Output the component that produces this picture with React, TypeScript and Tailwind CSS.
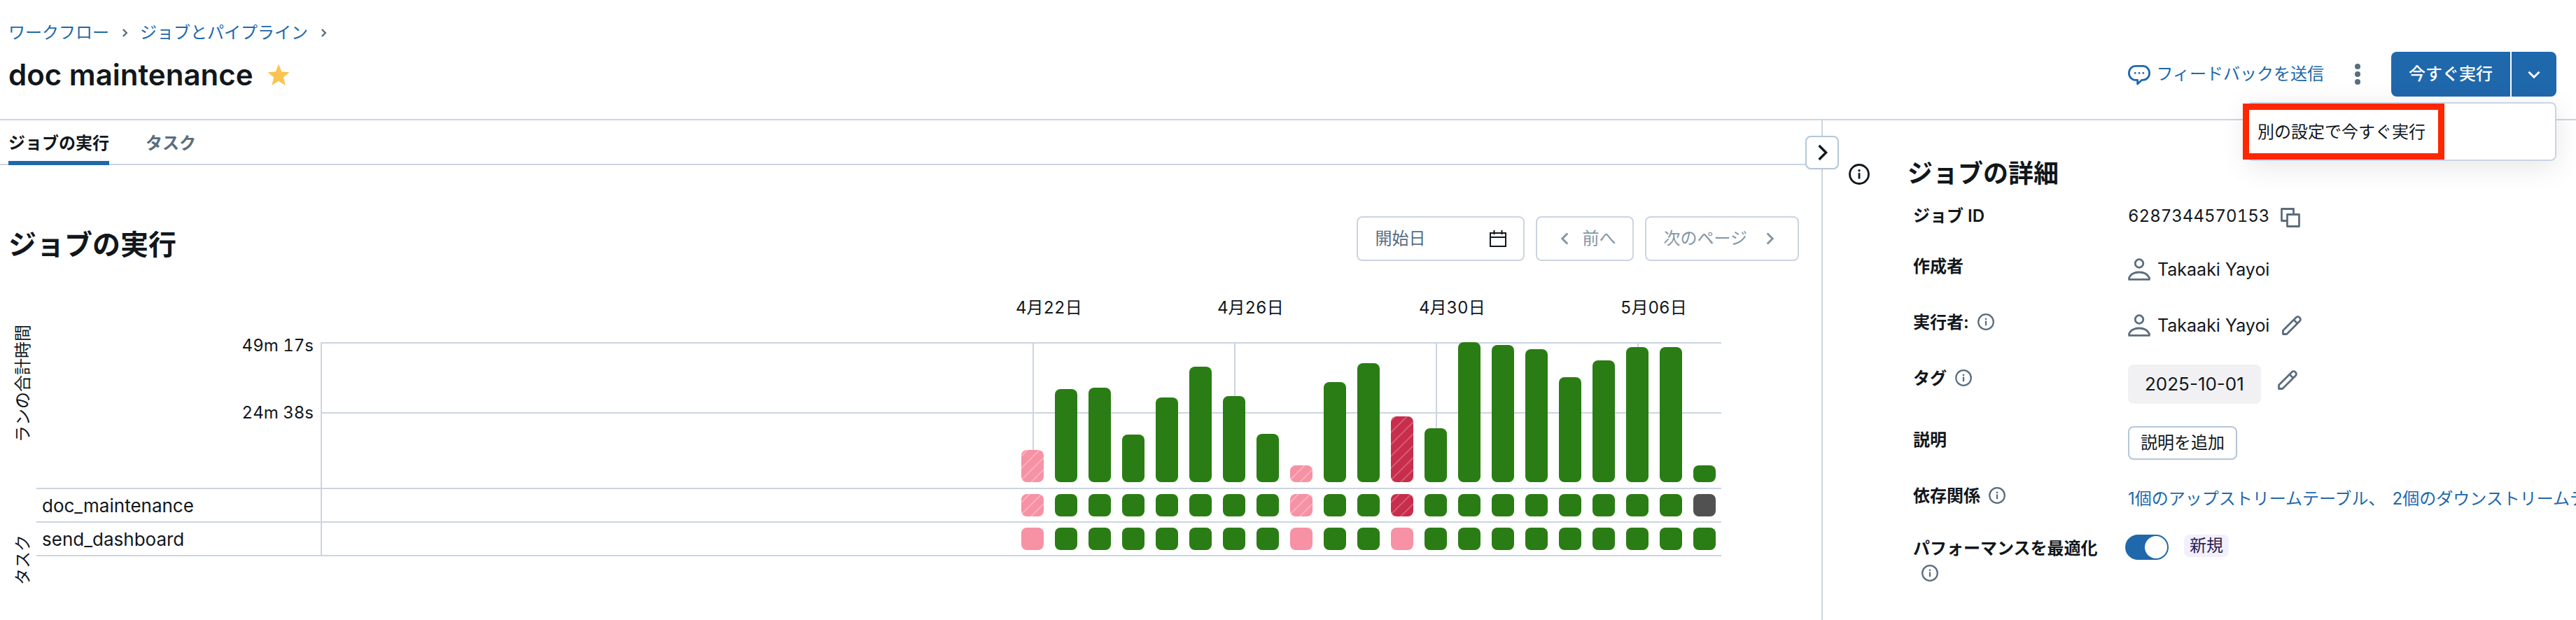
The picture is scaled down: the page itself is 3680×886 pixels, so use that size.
import type { ReactNode, SVGProps } from "react";

type Status = "success" | "skipped" | "failed" | "upstream" | "canceled";

interface Run {
  height: number;
  date?: string;
  run: Status;
  tasks: [Status, Status];
}

const ok = (height: number, date?: string): Run => ({
  height,
  date,
  run: "success",
  tasks: ["success", "success"],
});

const runs: Run[] = [
  { height: 46, date: "4月22日", run: "skipped", tasks: ["skipped", "upstream"] },
  ok(133),
  ok(135),
  ok(68),
  ok(121),
  ok(165),
  ok(123, "4月26日"),
  ok(69),
  { height: 24, run: "skipped", tasks: ["skipped", "upstream"] },
  ok(143),
  ok(170),
  { height: 94, run: "failed", tasks: ["failed", "upstream"] },
  ok(77, "4月30日"),
  ok(200),
  ok(196),
  ok(190),
  ok(150),
  ok(174),
  ok(193, "5月06日"),
  ok(193),
  { height: 24, run: "success", tasks: ["canceled", "success"] },
];

const statusClass: Record<Status, string> = {
  success: "bg-[#2a7d15]",
  upstream: "bg-[#f791a4]",
  canceled: "bg-[#515151]",
  skipped:
    "bg-[#f791a4] bg-[repeating-linear-gradient(-45deg,#faaebc_0px,#faaebc_2px,transparent_2px,transparent_12px)]",
  failed:
    "bg-[#c82d4c] bg-[repeating-linear-gradient(-45deg,#d45870_0px,#d45870_2px,transparent_2px,transparent_12px)]",
};

const taskNames = ["doc_maintenance", "send_dashboard"];

/* Icons */

const InfoIcon = (props: SVGProps<SVGSVGElement>) => (
  <svg viewBox="0 0 16 16" fill="currentColor" aria-hidden="true" {...props}>
    <path d="M7.25 7h1.5v4.5h-1.5z" />
    <circle cx="8" cy="5.2" r="0.9" />
    <circle cx="8" cy="8" r="7.2" fill="none" stroke="currentColor" strokeWidth="1.5" />
  </svg>
);

const Chevron = (props: SVGProps<SVGSVGElement>) => (
  <svg viewBox="0 0 16 16" fill="none" stroke="currentColor" strokeWidth="1.7" aria-hidden="true" {...props}>
    <path d="M5.8 3l5 5-5 5" />
  </svg>
);

const UserIcon = () => (
  <svg viewBox="0 0 32 32" className="size-8 text-[#5a6d7e]" fill="none" stroke="currentColor" strokeWidth="2.8" aria-hidden="true">
    <circle cx="16" cy="7.5" r="5.8" />
    <path d="M1.6 30.4v-2.6C4 23 9.6 20 16 20s12 3 14.4 7.8v2.6z" strokeLinejoin="round" />
  </svg>
);

const PencilIcon = () => (
  <svg viewBox="0 0 28 28" className="size-7" fill="none" stroke="currentColor" strokeWidth="2.8" strokeLinejoin="round" aria-hidden="true">
    <path d="M1.5 26.5v-5.2L20.3 2.5a3.2 3.2 0 014.5 0l.7.7a3.2 3.2 0 010 4.5L6.7 26.5zM16.8 6l5.200 5.200" />
  </svg>
);

const CopyIcon = () => (
  <svg viewBox="0 0 28 28" className="size-7" fill="none" stroke="currentColor" strokeWidth="2.8" strokeLinejoin="round" aria-hidden="true">
    <path d="M9.5 18.5h-8v-17h17v8" />
    <path d="M9.5 9.5h17v17h-17z" />
  </svg>
);

const CalendarIcon = () => (
  <svg viewBox="0 0 24 24" className="size-6 text-[#11171c]" fill="none" stroke="currentColor" strokeWidth="2" aria-hidden="true">
    <path d="M1 4h22v19H1zM1 10h22M6.5 0v6M17.5 0v6" />
  </svg>
);

const SpeechIcon = () => (
  <svg viewBox="0 0 32 32" className="size-8" fill="none" stroke="currentColor" strokeWidth="2.8" strokeLinejoin="round" aria-hidden="true">
    <path d="M11 4.400h10c5.400 0 9.600 4.400 9.600 10s-4.200 10-9.600 10h-1.500L13.600 30v-5.600H11c-5.400 0-9.600-4.400-9.600-10s4.200-10 9.600-10z" />
    <g fill="currentColor" stroke="none">
      <circle cx="10.2" cy="14.4" r="1.4" />
      <circle cx="16" cy="14.4" r="1.4" />
      <circle cx="21.8" cy="14.4" r="1.4" />
    </g>
  </svg>
);

const StarIcon = () => (
  <svg viewBox="0 0 32 32" className="size-8" fill="#fbc34f" aria-hidden="true">
    <path d="M16 .5l4.300 11 11.200.8-8.600 7.300 2.800 11.400L16 24.800 6.300 31l2.800-11.400L.5 12.300l11.200-.8z" />
  </svg>
);

/* Left side */

const RunChart = () => (
  <div className="mt-11 mr-[143px] flex flex-col tabular-nums">
    <div className="flex">
      <div className="flex w-[52px] shrink-0 justify-center pt-[46px] pl-[14px]">
        <span className="h-[168px] rotate-180 whitespace-nowrap [text-orientation:sideways] [writing-mode:vertical-rl]">
          ランの合計時間
        </span>
      </div>
      <div className="flex w-[406px] shrink-0 flex-col gap-16 pt-[60px] pr-[10px] text-right">
        <span>49m 17s</span>
        <span>24m 38s</span>
      </div>
      <div className="min-w-0 flex-1 pt-[71px]">
        <div className="relative h-[208px] border-t-2 border-l-2 border-[#cbd5e1]">
          <div className="absolute inset-x-0 top-[98px] border-t-2 border-[#cbd5e1]" />
          <div className="absolute -top-0.5 right-2 flex h-[200px] items-end gap-4">
            {runs.map((r, i) => (
              <div key={i} className="relative flex h-full w-8 items-end">
                {r.date && (
                  <>
                    <span className="absolute -top-[65px] -left-2 whitespace-nowrap">{r.date}</span>
                    <div className="absolute inset-y-0 left-4 w-0.5 bg-[#cbd5e1]" />
                  </>
                )}
                <div className={`relative w-full rounded-lg ${statusClass[r.run]}`} style={{ height: r.height }} />
              </div>
            ))}
          </div>
        </div>
      </div>
    </div>

    <div className="flex">
      <div className="flex w-[52px] shrink-0 justify-center pt-[67px] pl-[14px]">
        <span className="h-[72px] rotate-180 whitespace-nowrap [text-orientation:sideways] [writing-mode:vertical-rl]">
          タスク
        </span>
      </div>
      <div className="flex-1">
        {taskNames.map((name, t) => (
          <div key={name} className="flex h-12 border-t-2 border-[#cbd5e1] last:h-[50px] last:border-b-2">
            <span className="w-[408px] shrink-0 border-r-2 border-[#cbd5e1] pt-2 pl-2 text-[26px]">{name}</span>
            <div className="flex flex-1 items-center justify-end gap-4 pr-2">
              {runs.map((r, i) => (
                <div key={i} className={`size-8 rounded-lg ${statusClass[r.tasks[t]]}`} />
              ))}
            </div>
          </div>
        ))}
      </div>
    </div>
  </div>
);

/* Right side */

interface DetailRowProps {
  label: string;
  info?: boolean;
  className?: string;
  valueClassName?: string;
  children: ReactNode;
}

const DetailRow = ({ label, info, className = "", valueClassName = "", children }: DetailRowProps) => (
  <div className={`flex items-start ${className}`}>
    <dt className="mr-3 w-[295px] shrink-0 pt-0.5 leading-9 font-semibold">
      {label}
      {info && <InfoIcon className="ml-3 inline size-6 align-[-3px] text-[#5a6d7e]" />}
    </dt>
    <dd className={`flex items-center whitespace-nowrap ${valueClassName}`}>{children}</dd>
  </div>
);

const JobDetails = () => (
  <aside className="flex min-w-0 flex-1 overflow-hidden pt-[52px] pl-[37px]">
    <InfoIcon className="mt-[10px] size-[30px] shrink-0" />
    <div className="ml-[54px]">
      <h2 className="h-[65px] text-4xl leading-[48px] font-semibold">ジョブの詳細</h2>
      <dl className="pl-2">
        <DetailRow label="ジョブ ID" className="h-[72px]" valueClassName="pt-1 gap-4 tabular-nums">
          6287344570153
          <button type="button" aria-label="コピー" className="mt-1 text-[#5a6d7e]">
            <CopyIcon />
          </button>
        </DetailRow>
        <DetailRow label="作成者" className="h-20" valueClassName="pt-2 gap-2.5 text-[25px]">
          <UserIcon />
          Takaaki Yayoi
        </DetailRow>
        <DetailRow label="実行者:" info className="h-20" valueClassName="pt-2 gap-2.5 text-[25px]">
          <UserIcon />
          Takaaki Yayoi
          <button type="button" aria-label="実行者を編集" className="ml-2 text-[#5a6d7e]">
            <PencilIcon />
          </button>
        </DetailRow>
        <DetailRow label="タグ" info className="h-[88px]">
          <span className="rounded-lg bg-[#f1f1f4] px-6 py-3 text-[26px]">2025-10-01</span>
          <button type="button" aria-label="タグを編集" className="mt-2 ml-6 self-start text-[#5a6d7e]">
            <PencilIcon />
          </button>
        </DetailRow>
        <DetailRow label="説明" className="h-20">
          <button type="button" className="h-12 rounded-lg border-2 border-[#b5c7d8] px-4 shadow-xs">
            説明を追加
          </button>
        </DetailRow>
        <DetailRow label="依存関係" info className="h-[75px]" valueClassName="pt-2 gap-2.5">
          <a href="#upstream" className="text-[#2068ac]">1個のアップストリームテーブル、</a>
          <a href="#downstream" className="text-[#2068ac]">2個のダウンストリームテーブル</a>
        </DetailRow>
        <DetailRow label="パフォーマンスを最適化" info>
          <input
            type="checkbox"
            role="switch"
            defaultChecked
            aria-label="パフォーマンスを最適化"
            className="-ml-1 h-9 w-[62px] appearance-none rounded-full border-2 border-[#2068ac] bg-[#2068ac] before:ml-auto before:block before:size-8 before:rounded-full before:bg-white"
          />
          <span className="ml-[22px] self-start rounded-lg bg-[#f2f0fc] px-2 text-[#2c1f55]">新規</span>
        </DetailRow>
      </dl>
    </div>
  </aside>
);

const App = () => {
  return (
    <div className="flex min-h-screen flex-col overflow-hidden bg-white font-['Inter','Noto_Sans_CJK_JP',sans-serif] text-2xl leading-8 text-[#11171c]">
      <header className="flex h-[172px] items-start justify-between border-b-2 border-[#cbd5e1] pr-7 pl-3">
        <div>
          <nav className="flex items-center gap-[14px] pt-[31px] text-[#2068ac]">
            <a href="#workflows">ワークフロー</a>
            <Chevron className="size-4 text-[#5a6d7e]" strokeWidth="2.4" />
            <a href="#jobs">ジョブとパイプライン</a>
            <Chevron className="size-4 text-[#5a6d7e]" strokeWidth="2.4" />
          </nav>
          <div className="mt-4 flex items-center gap-5">
            <h1 className="text-[42px] leading-[56px] font-semibold">doc maintenance</h1>
            <button type="button" aria-label="お気に入り">
              <StarIcon />
            </button>
          </div>
        </div>

        <div className="flex items-center pt-[74px]">
          <a href="#feedback" className="flex items-center gap-2 text-[#2068ac]">
            <SpeechIcon />
            フィードバックを送信
          </a>
          <button type="button" aria-label="その他" className="mx-11 flex flex-col gap-[3px] text-[#5a6d7e]">
            <i className="size-2 rounded-full bg-current" />
            <i className="size-2 rounded-full bg-current" />
            <i className="size-2 rounded-full bg-current" />
          </button>
          <div className="relative flex h-16 text-white">
            <button type="button" className="rounded-l-lg bg-[#2068ac] px-[25px] font-medium">
              今すぐ実行
            </button>
            <button type="button" aria-label="実行オプション" className="ml-0.5 flex w-16 items-center justify-center rounded-r-lg bg-[#2068ac]">
              <Chevron className="size-6 rotate-90" strokeWidth="2" />
            </button>
            <div className="absolute top-[72px] right-0 z-10 flex h-[84px] w-[442px] items-center rounded-lg border-2 border-[#cbd5e1] bg-white text-[#11171c] shadow-[0_8px_40px_rgba(0,0,0,0.10)]">
              <button type="button" className="-ml-2 h-20 w-72 shrink-0 border-[9px] border-[#ff2600] pt-0.5 pl-3 text-left">
                別の設定で今すぐ実行
              </button>
            </div>
          </div>
        </div>
      </header>

      <div className="flex flex-1">
        <main className="relative w-[2604px] shrink-0 border-r-2 border-[#cbd5e1]">
          <div className="flex h-16 items-end gap-[52px] border-b-2 border-[#cbd5e1] pl-3" role="tablist">
            <button type="button" role="tab" aria-selected="true" className="-mb-0.5 h-14 border-b-[6px] border-[#2068ac] font-semibold">
              ジョブの実行
            </button>
            <button type="button" role="tab" aria-selected="false" className="-mb-0.5 h-14 border-b-[6px] border-transparent font-semibold text-[#5a6d7e]">
              タスク
            </button>
          </div>
          <button
            type="button"
            aria-label="詳細を閉じる"
            className="absolute top-[22px] -right-[25px] z-10 flex size-12 items-center justify-center rounded-lg border-2 border-[#b5c7d8] bg-white shadow-xs"
          >
            <Chevron className="size-8" />
          </button>

          <div className="mt-[73px] flex items-start pr-8 pl-3">
            <h2 className="mt-[17px] text-[40px] leading-[48px] font-semibold">ジョブの実行</h2>
            <div className="ml-auto flex h-16 gap-4 text-[#8396a5]">
              <button type="button" className="flex w-60 items-center justify-between rounded-lg border-2 border-[#cbd5e1] px-6 text-[#5a6d7e]">
                開始日
                <CalendarIcon />
              </button>
              <button type="button" disabled className="flex items-center gap-3 rounded-lg border-2 border-[#cbd5e1] px-6">
                <Chevron className="ml-1 size-6 rotate-180" strokeWidth="2" />
                前へ
              </button>
              <button type="button" disabled className="flex items-center gap-5 rounded-lg border-2 border-[#cbd5e1] px-6">
                次のページ
                <Chevron className="mr-1 size-6" strokeWidth="2" />
              </button>
            </div>
          </div>

          <RunChart />
        </main>
        <JobDetails />
      </div>
    </div>
  );
};

export default App;
